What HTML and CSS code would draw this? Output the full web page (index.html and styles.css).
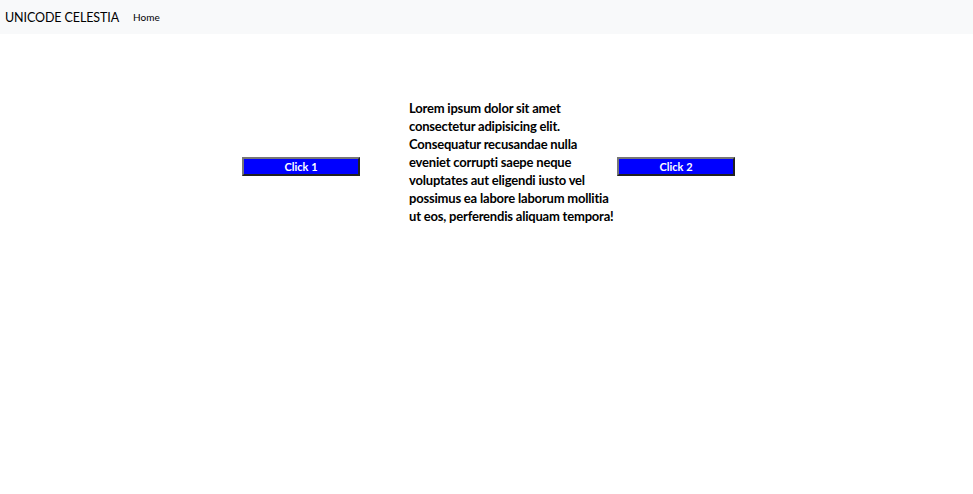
FILE: index.html
```
<!DOCTYPE html>
<html>
<head>
<meta charset="utf-8">
<link rel="stylesheet" href="styles.css">
</head>
<body>
<nav class="navbar">
  <span class="brand">UNICODE CELESTIA</span>
  <a class="nav-link" href="#">Home</a>
</nav>
<main class="row">
  <button class="btn">Click 1</button>
  <p class="text">Lorem ipsum dolor sit amet consectetur adipisicing elit. Consequatur recusandae nulla eveniet corrupti saepe neque voluptates aut eligendi iusto vel possimus ea labore laborum mollitia ut eos, perferendis aliquam tempora!</p>
  <button class="btn">Click 2</button>
</main>
</body>
</html>
```
FILE: styles.css
```
html, body { margin: 0; padding: 0; background: #fff; }
body { font-family: Lato, "Noto Sans", sans-serif; color: #000; }
.navbar {
  height: 34px;
  background: #f8f9fa;
  display: flex;
  align-items: center;
  padding-left: 5px;
}
.brand { font-size: 12.5px; color: #000; letter-spacing: -0.1px; }
.nav-link { font-size: 10px; color: #000; text-decoration: none; margin-left: 14px; }
.row {
  display: flex;
  align-items: center;
  padding-top: 65px;
  padding-left: 242px;
}
.btn {
  width: 118px;
  height: 19px;
  background: #0000ff;
  color: #fff;
  font-family: Lato, sans-serif;
  font-weight: 700;
  font-size: 11px;
  border: 2px outset #767676;
  padding: 0;
  margin: 8px 0 0 0;
  flex: none;
}
.text {
  width: 208px;
  margin: 0 0 0 49px;
  font-weight: 700;
  font-size: 13px;
  line-height: 18px;
  letter-spacing: -0.2px;
}
```
